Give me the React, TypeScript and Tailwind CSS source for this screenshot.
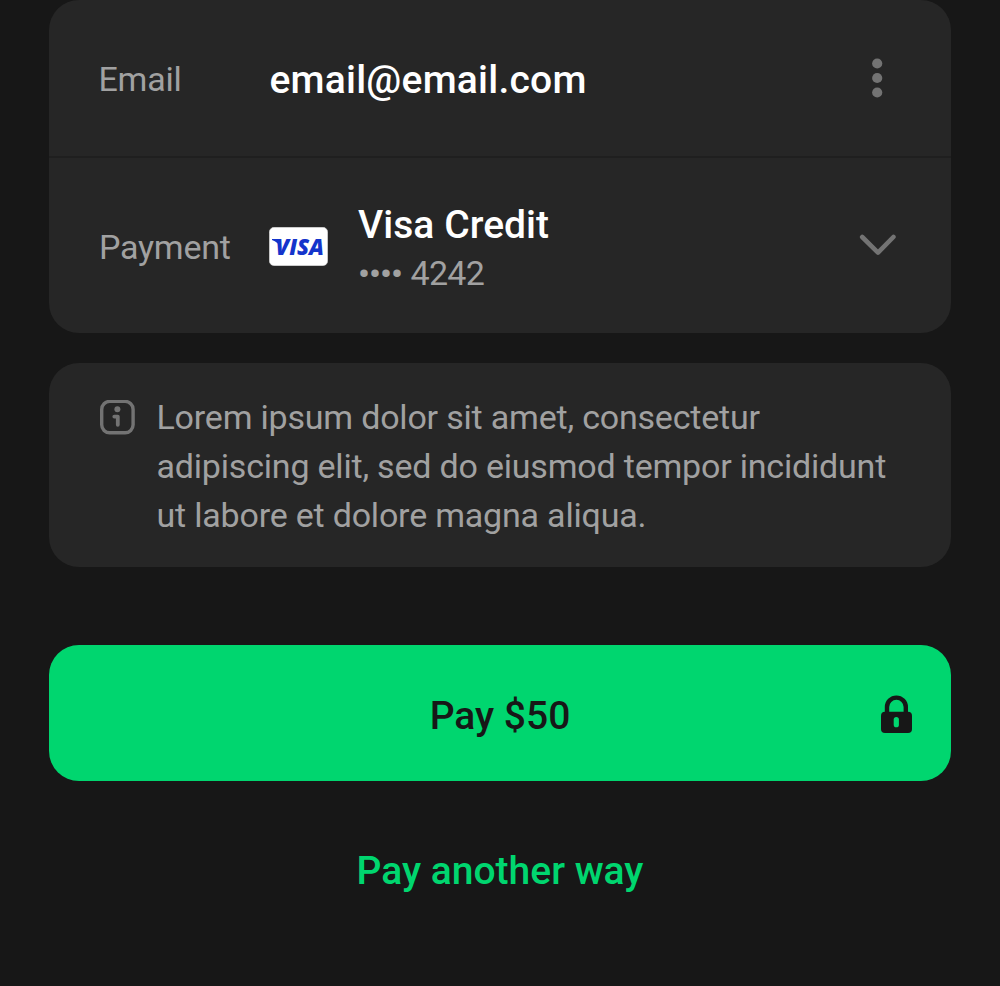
export default function App() {
  return (
    <main className="h-[986px] w-[1000px] overflow-hidden bg-[#171717] px-[49px] font-['Roboto',sans-serif] text-[#a1a1a1]">
      <section className="flex h-[333px] flex-col rounded-[30px] bg-[#262626]">
        <div className="flex h-[158px] items-center border-b-2 border-[#1f1f1f] pl-[49.5px] pt-1">
          <span className="w-[171px] text-[34px] leading-[40px] tracking-[-0.25px] -mt-[2px]">Email</span>
          <span className="text-[39px] leading-[46px] font-medium tracking-[0.22px] text-white">email@email.com</span>
          <svg className="mr-[68px] ml-auto -mt-[5px] h-[40px] w-[12px]" viewBox="0 0 12 40" fill="#737373">
            <circle cx="6.2" cy="5.5" r="5.1" /><circle cx="6.2" cy="20" r="5.1" /><circle cx="6.2" cy="34.5" r="5.1" />
          </svg>
        </div>
        <div className="flex h-[175px] items-center pl-[50px]">
          <span className="w-[170px] pt-[2px] text-[34px] leading-[40px] tracking-[-0.25px]">Payment</span>
          <svg className="mt-[2px] h-[39px] w-[59px]" viewBox="0 0 59 39">
            <rect x="0.3" y="0.3" width="58.4" height="38.4" rx="5" fill="white" stroke="#cfcfcf" strokeWidth="0.6" />
            <path d="M3 12H9.5L12 21C10 17 7 14.2 3 13Z" fill="#1434cb" />
            <text x="6.5" y="28" fontSize="22" fontWeight="800" fontStyle="italic" fontFamily="Open Sans" fill="#1434cb" textLength="48.5" lengthAdjust="spacingAndGlyphs">VISA</text>
          </svg>
          <div className="ml-[30px] flex flex-col pt-[8px]">
            <span className="text-[39px] leading-[49px] font-medium tracking-[0.05px] text-white">Visa Credit</span>
            <span className="-mt-px flex text-[34px] leading-[49px]">
              <span className="w-[52.5px] font-medium tracking-[-0.9px]">••••</span>
              <span className="tracking-[-0.7px]">4242</span>
            </span>
          </div>
          <svg className="-mt-[2px] mr-[54px] ml-auto h-[24px] w-[38px]" viewBox="0 0 38 24" fill="none" stroke="#737373" strokeWidth="4.6" strokeLinecap="round" strokeLinejoin="round"><path d="M3.2 4 19 19.6 34.4 4" /></svg>
        </div>
      </section>
      <section className="mt-[30px] flex h-[204px] rounded-[30px] bg-[#262626] pt-[30px] pl-[51px]">
        <svg className="mt-[7px] h-[35px] w-[35px]" viewBox="0 0 35 35" fill="none" stroke="#737373" strokeWidth="3.4"><rect x="1.7" y="1.4" width="31.4" height="31.4" rx="8" /><path d="M14.3 16.6h3.5v8.2" strokeWidth="3.8" strokeLinecap="round" strokeLinejoin="round" /><circle cx="17.4" cy="9.3" r="3" fill="#737373" stroke="none" /></svg>
        <p className="ml-[21.5px] text-[34px] leading-[49px] tracking-[-0.2px]">Lorem ipsum dolor sit amet, consectetur<br />adipiscing elit, sed do eiusmod tempor incididunt<br />ut labore et dolore magna aliqua.</p>
      </section>
      <button className="mt-[78px] grid h-[136px] w-full grid-cols-[1fr_auto_1fr] items-center rounded-[30px] bg-[#00d66f] text-[#171717]">
        <span />
        <span className="pt-[6px] text-[39px] leading-[49px] font-medium">Pay $50</span>
        <svg className="mt-[2px] mr-[39px] h-[38px] w-[31px] justify-self-end" viewBox="0 0 31 38"><rect y="16.7" width="31" height="21.3" rx="4" fill="#171717" /><path d="M6 19v-7a9.4 9.4 0 0 1 18.8 0V19" fill="none" stroke="#171717" strokeWidth="4.4" /><rect x="12.7" y="22" width="5.2" height="10.3" rx="2.6" fill="#00d66f" /></svg>
      </button>
      <button className="mx-auto mt-[66px] block text-[39px] leading-[49px] font-medium text-[#00d66f]">Pay another way</button>
    </main>
  );
}
